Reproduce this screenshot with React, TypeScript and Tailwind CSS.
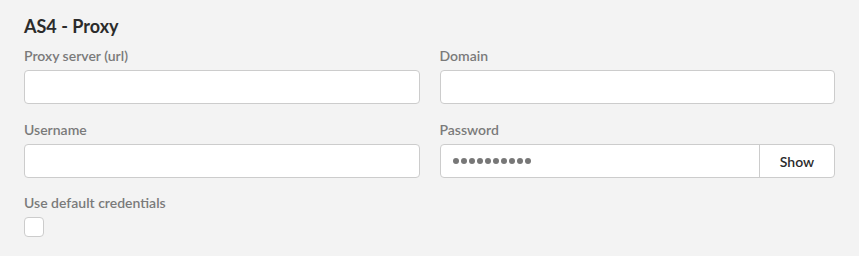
import React from "react";

const Label = ({ children }: { children: React.ReactNode }) => (
  <div className="text-[14px] font-semibold text-[#7a7a7a] leading-[16px] h-[16px] mb-[6px]">{children}</div>
);

const Input = () => (
  <div className="h-[34px] bg-white border border-[#cccccc] rounded-[4px]" />
);

export default function App() {
  return (
    <div className="w-[859px] h-[256px] bg-[#f3f3f3] px-[24px] pt-[14px]" style={{ fontFamily: "Lato, 'Open Sans', sans-serif" }}>
      <div className="text-[18px] font-bold text-[#2b2b2b] leading-[24px] h-[24px] mb-[10px]">AS4 - Proxy</div>
      <div className="grid grid-cols-2 gap-x-[20px] gap-y-[18px]">
        <div>
          <Label>Proxy server (url)</Label>
          <Input />
        </div>
        <div>
          <Label>Domain</Label>
          <Input />
        </div>
        <div>
          <Label>Username</Label>
          <Input />
        </div>
        <div>
          <Label>Password</Label>
          <div className="h-[34px] bg-white border border-[#cccccc] rounded-[4px] flex">
            <div className="flex-1 flex items-center pl-[12px] gap-[2px]">
              {Array.from({ length: 10 }).map((_, i) => (
                <span key={i} className="w-[6px] h-[6px] rounded-full bg-[#777777]" />
              ))}
            </div>
            <div className="w-[75px] border-l border-[#cccccc] flex items-center justify-center text-[14px] font-semibold text-[#2b2b2b]">
              Show
            </div>
          </div>
        </div>
      </div>
      <div className="mt-[17px]">
        <Label>Use default credentials</Label>
        <div className="w-[20px] h-[20px] bg-white border border-[#cccccc] rounded-[4px]" />
      </div>
    </div>
  );
}
